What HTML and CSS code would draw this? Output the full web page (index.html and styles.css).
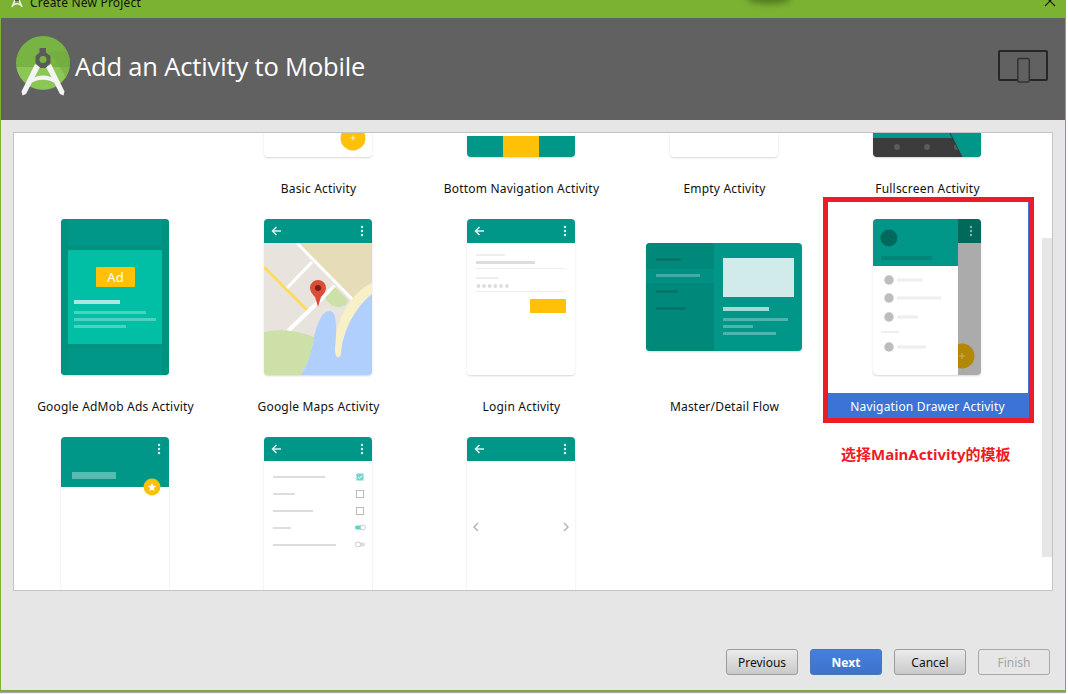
FILE: index.html
```html
<!DOCTYPE html>
<html lang="en">
<head>
    <meta charset="UTF-8">
    <meta name="viewport" content="width=device-width, initial-scale=1.0">
    <title>Create New Project</title>
    <link rel="stylesheet" href="styles.css">
</head>
<body>
    <svg class="defs" width="0" height="0">
        <defs>
            <g id="app-bar">
                <rect width="108" height="24" fill="#009688"/>
                <path d="M17 12H9M12.5 8L8.5 12L12.5 16" fill="none" stroke="#e0f2f1" stroke-width="1.5"/>
                <circle cx="98" cy="8" r="1.2" fill="#e0f2f1"/>
                <circle cx="98" cy="12" r="1.2" fill="#e0f2f1"/>
                <circle cx="98" cy="16" r="1.2" fill="#e0f2f1"/>
            </g>
        </defs>
    </svg>

    <div class="window">
        <div class="titlebar">
            <svg class="title-icon" viewBox="0 0 14 12" width="14" height="12">
                <path d="M5 4L2 11M9 4L12 11M3.500 9Q7 6.500 10.500 9" fill="none" stroke="#f2f2f2" stroke-width="1.500"/>
                <rect x="5" y="1" width="4" height="4" fill="#555"/>
            </svg>
            <span class="title-text">Create New Project</span>
            <span class="title-blob"></span>
            <svg class="title-close" viewBox="0 0 12 12" width="12" height="12">
                <path d="M1 1L11 11M11 1L1 11" stroke="#1a1a1a" stroke-width="1.1"/>
            </svg>
        </div>

        <div class="header">
            <svg class="logo" viewBox="0 0 54 60" width="54" height="60">
                <circle cx="27" cy="27" r="27" fill="#78b443"/>
                <path d="M0.4 31A27 27 0 0 0 53.6 31Z" fill="#8bc657"/>
                <path d="M34 16L51 15A27 27 0 0 1 50 41Z" fill="#6fa83e" opacity="0.5"/>
                <path d="M19 28L24 31L10 58L6.500 59.500L5.500 55.500ZM35 28L30 31L44 58L47.500 59.500L48.500 55.500Z" fill="#f4f4f4"/>
                <path d="M11.500 45Q27 34 42.500 45L41 48Q27 39.500 13 48Z" fill="#f4f4f4"/>
                <path d="M23.500 12H30V16.500L34.500 20V27L29.500 32H24.500L19.500 27V20L23.500 16.500Z" fill="#5a5a5a"/>
                <circle cx="27" cy="23.500" r="3.500" fill="#78b443"/>
            </svg>
            <h1 class="header-title">Add an Activity to Mobile</h1>
            <svg class="device-icon" viewBox="0 0 50 34" width="50" height="34">
                <rect x="1" y="1" width="48" height="29" rx="1" fill="none" stroke="#262626" stroke-width="2"/>
                <rect x="19.800" y="8.500" width="11.500" height="23.500" rx="1.500" fill="#616161" stroke="#333" stroke-width="1.500"/>
            </svg>
        </div>

        <div class="content">
            <div class="panel">
                <div class="gallery">

                    <div class="cell">
                        <div class="thumb-slot"></div>
                    </div>

                    <div class="cell">
                        <div class="thumb-slot">
                            <svg class="thumb" viewBox="0 0 108 156">
                                <rect width="108" height="156" fill="#fff"/>
                                <circle cx="89" cy="137" r="12.500" fill="#ffc107"/>
                                <path d="M86.500 137H91.500M89 134.500V139.500" stroke="#fff2c4" stroke-width="1"/>
                            </svg>
                        </div>
                        <div class="label">Basic Activity</div>
                    </div>

                    <div class="cell">
                        <div class="thumb-slot">
                            <svg class="thumb" viewBox="0 0 108 156">
                                <rect width="108" height="156" fill="#fff"/>
                                <rect y="135" width="108" height="21" fill="#009688"/>
                                <rect x="36" y="135" width="36" height="21" fill="#ffc107"/>
                            </svg>
                        </div>
                        <div class="label">Bottom Navigation Activity</div>
                    </div>

                    <div class="cell">
                        <div class="thumb-slot">
                            <svg class="thumb" viewBox="0 0 108 156">
                                <rect width="108" height="156" fill="#fff"/>
                            </svg>
                        </div>
                        <div class="label">Empty Activity</div>
                    </div>

                    <div class="cell">
                        <div class="thumb-slot">
                            <svg class="thumb" viewBox="0 0 108 156">
                                <rect width="108" height="138" fill="#009688"/>
                                <rect y="137" width="108" height="19" fill="#3c3c3c"/>
                                <circle cx="24" cy="146" r="3" fill="#5b5b5b"/>
                                <circle cx="54" cy="146" r="3" fill="#5b5b5b"/>
                                <circle cx="84" cy="146" r="3" fill="#5b5b5b"/>
                                <path d="M76 130H108V156H89Z" fill="#009688"/>
                                <path d="M76 130L89 156" stroke="#2f2f2f" stroke-width="0.8"/>
                            </svg>
                        </div>
                        <div class="label">Fullscreen Activity</div>
                    </div>

                    <div class="cell">
                        <div class="thumb-slot">
                            <svg class="thumb" viewBox="0 0 108 156">
                                <rect width="108" height="156" fill="#009688"/>
                                <rect width="7" height="156" fill="#00917f"/>
                                <rect x="101" width="7" height="156" fill="#00917f"/>
                                <rect y="27" width="108" height="4" fill="#00917f"/>
                                <rect y="125" width="108" height="4" fill="#00917f"/>
                                <rect x="7" y="31" width="94" height="94" rx="1" fill="#00bfa5"/>
                                <rect x="35" y="48" width="39" height="20" rx="1" fill="#ffc107"/>
                                <text x="54.500" y="63" class="ad-text">Ad</text>
                                <rect x="13" y="81" width="46" height="4" fill="#fff" opacity="0.65"/>
                                <rect x="13" y="92" width="72" height="3" fill="#fff" opacity="0.3"/>
                                <rect x="13" y="99" width="82" height="3" fill="#fff" opacity="0.3"/>
                                <rect x="13" y="106" width="52" height="3" fill="#fff" opacity="0.3"/>
                            </svg>
                        </div>
                        <div class="label">Google AdMob Ads Activity</div>
                    </div>

                    <div class="cell">
                        <div class="thumb-slot">
                            <svg class="thumb" viewBox="0 0 108 156">
                                <rect width="108" height="156" fill="#e8e4dd"/>
                                <path d="M33 24H108V64Q98 70 92 83Z" fill="#e6dcb8"/>
                                <path d="M0 48L43 91" stroke="#fddc5c" stroke-width="3"/>
                                <path d="M33 24L91 83M48 43L23 69" stroke="#fff" stroke-width="3"/>
                                <path d="M71 67L24 112" stroke="#fff" stroke-width="4"/>
                                <path d="M61 79L71 68L84 81Q83 88 75 88Q66 88 61 79Z" fill="#cde0a8"/>
                                <path d="M108 64C90 72 73 95 70 130C70 139 75 141 77 135C79 110 92 88 108 75Z" fill="#f8f1c8"/>
                                <path d="M108 75C92 88 79 110 77 135C75 141 71 139 71 130C73 112 73 92 66 92C58 92 54 103 50 118C47 135 43 148 36 156H108Z" fill="#b0cffc"/>
                                <path d="M0 113Q25 108 50 118C47 135 43 148 36 156H0Z" fill="#cde0a8"/>
                                <path d="M54 88L51 78C48 75 46 72 46 69A8 8 0 0 1 62 69C62 72 60 75 57 78Z" fill="#dd4b39"/>
                                <circle cx="54" cy="69" r="3" fill="#7b1f16"/>
                                <use href="#app-bar"/>
                            </svg>
                        </div>
                        <div class="label">Google Maps Activity</div>
                    </div>

                    <div class="cell">
                        <div class="thumb-slot">
                            <svg class="thumb" viewBox="0 0 108 156">
                                <rect width="108" height="156" fill="#fff"/>
                                <use href="#app-bar"/>
                                <rect x="9" y="35" width="29" height="2" fill="#eee"/>
                                <rect x="9" y="42" width="59" height="3" fill="#ddd"/>
                                <rect x="9" y="49" width="90" height="1" fill="#eee"/>
                                <rect x="9" y="58" width="22" height="2" fill="#eee"/>
                                <circle cx="11.500" cy="67" r="1.900" fill="#ddd"/>
                                <circle cx="17" cy="67" r="1.900" fill="#ddd"/>
                                <circle cx="22.700" cy="67" r="1.900" fill="#ddd"/>
                                <circle cx="28.300" cy="67" r="1.900" fill="#ddd"/>
                                <circle cx="34" cy="67" r="1.900" fill="#ddd"/>
                                <circle cx="40" cy="67" r="1.900" fill="#ddd"/>
                                <rect x="9" y="72" width="90" height="1" fill="#eee"/>
                                <rect x="63" y="80" width="36" height="14" fill="#ffc107"/>
                            </svg>
                        </div>
                        <div class="label">Login Activity</div>
                    </div>

                    <div class="cell">
                        <div class="thumb-slot">
                            <svg class="thumb thumb-wide" viewBox="0 0 156 108">
                                <rect width="156" height="108" fill="#009688"/>
                                <rect width="68" height="108" fill="#00897b"/>
                                <rect y="26" width="68" height="14" fill="#009083"/>
                                <rect x="10" y="15" width="25" height="3" fill="#00756a"/>
                                <rect x="10" y="31" width="44" height="3" fill="#fff" opacity="0.25"/>
                                <rect x="10" y="47" width="22" height="3" fill="#00756a"/>
                                <rect x="10" y="64" width="29" height="3" fill="#00756a"/>
                                <rect x="77" y="15" width="71" height="39" fill="#d1eaea"/>
                                <rect x="77" y="64" width="46" height="4" fill="#fff" opacity="0.65"/>
                                <rect x="77" y="75" width="65" height="3" fill="#fff" opacity="0.3"/>
                                <rect x="77" y="82" width="30" height="3" fill="#fff" opacity="0.3"/>
                                <rect x="77" y="89" width="53" height="3" fill="#fff" opacity="0.3"/>
                            </svg>
                        </div>
                        <div class="label">Master/Detail Flow</div>
                    </div>

                    <div class="cell cell-selected">
                        <div class="thumb-slot">
                            <svg class="thumb" viewBox="0 0 108 156">
                                <rect width="108" height="156" fill="#ababab"/>
                                <rect x="85" width="23" height="24" fill="#00695c"/>
                                <circle cx="98" cy="8" r="1.200" fill="#80b4ad"/>
                                <circle cx="98" cy="12" r="1.200" fill="#80b4ad"/>
                                <circle cx="98" cy="16" r="1.200" fill="#80b4ad"/>
                                <circle cx="89" cy="137" r="12.500" fill="#b28704"/>
                                <path d="M86 137H92M89 134V140" stroke="#c9ae5c" stroke-width="1"/>
                                <rect width="85" height="156" fill="#fff"/>
                                <rect width="85" height="47" fill="#009688"/>
                                <circle cx="16" cy="19" r="8.500" fill="#00695c"/>
                                <rect x="8" y="37" width="51" height="4" fill="#008577"/>
                                <circle cx="16" cy="61" r="4.700" fill="#bdbdbd"/>
                                <rect x="24" y="59.500" width="25" height="3" fill="#eee"/>
                                <circle cx="16" cy="79" r="4.700" fill="#bdbdbd"/>
                                <rect x="24" y="77.500" width="44" height="3" fill="#eee"/>
                                <circle cx="16" cy="98" r="4.700" fill="#bdbdbd"/>
                                <rect x="24" y="96.500" width="21" height="3" fill="#eee"/>
                                <rect x="8" y="112" width="18" height="2" fill="#eee"/>
                                <circle cx="16" cy="128" r="4.700" fill="#bdbdbd"/>
                                <rect x="24" y="126.500" width="29" height="3" fill="#eee"/>
                            </svg>
                        </div>
                        <div class="label">Navigation Drawer Activity</div>
                    </div>

                    <div class="cell">
                        <div class="thumb-slot">
                            <svg class="thumb" viewBox="0 0 108 156">
                                <rect width="108" height="156" fill="#fff"/>
                                <rect width="108" height="50" fill="#009688"/>
                                <circle cx="98" cy="8" r="1.200" fill="#e0f2f1"/>
                                <circle cx="98" cy="12" r="1.200" fill="#e0f2f1"/>
                                <circle cx="98" cy="16" r="1.200" fill="#e0f2f1"/>
                                <rect x="11" y="35" width="44" height="7" fill="#fff" opacity="0.35"/>
                                <circle cx="91" cy="50" r="8.500" fill="#ffc107"/>
                                <path d="M91 46L92.200 48.800L95.200 49L92.900 51L93.600 54L91 52.400L88.400 54L89.100 51L86.800 49L89.800 48.800Z" fill="#fff"/>
                            </svg>
                        </div>
                    </div>

                    <div class="cell">
                        <div class="thumb-slot">
                            <svg class="thumb" viewBox="0 0 108 156">
                                <rect width="108" height="156" fill="#fff"/>
                                <use href="#app-bar"/>
                                <rect x="9" y="39" width="52" height="2" fill="#ddd"/>
                                <rect x="9" y="56" width="22" height="2" fill="#ddd"/>
                                <rect x="9" y="73" width="40" height="2" fill="#ddd"/>
                                <rect x="9" y="90" width="18" height="2" fill="#ddd"/>
                                <rect x="9" y="107" width="63" height="2" fill="#ddd"/>
                                <rect x="92.500" y="36.500" width="7" height="7" fill="#6fd8cc"/>
                                <path d="M94 40L95.500 41.500L98 38.500" fill="none" stroke="#fff" stroke-width="1"/>
                                <rect x="92.500" y="53.500" width="7" height="7" fill="#fff" stroke="#bbb"/>
                                <rect x="92.500" y="70.500" width="7" height="7" fill="#fff" stroke="#bbb"/>
                                <rect x="91" y="88.500" width="10" height="4" rx="2" fill="#5fd3c6"/>
                                <circle cx="99" cy="90.500" r="2.500" fill="#fff" stroke="#bbb" stroke-width="0.7"/>
                                <rect x="91" y="105.500" width="10" height="4" rx="2" fill="#ddd"/>
                                <circle cx="94" cy="107.500" r="2.500" fill="#fff" stroke="#bbb" stroke-width="0.7"/>
                            </svg>
                        </div>
                    </div>

                    <div class="cell">
                        <div class="thumb-slot">
                            <svg class="thumb" viewBox="0 0 108 156">
                                <rect width="108" height="156" fill="#fff"/>
                                <use href="#app-bar"/>
                                <path d="M11 86L7 90L11 94M97 86L101 90L97 94" fill="none" stroke="#b5b5b5" stroke-width="1.500"/>
                            </svg>
                        </div>
                    </div>

                </div>
                <div class="scrollbar"></div>
                <div class="highlight"></div>
                <div class="annotation">选择MainActivity的模板</div>
            </div>
        </div>

        <div class="footer">
            <button class="btn" type="button">Previous</button>
            <button class="btn btn-primary" type="button">Next</button>
            <button class="btn" type="button">Cancel</button>
            <button class="btn btn-disabled" type="button" disabled>Finish</button>
        </div>
    </div>
</body>
</html>
```

FILE: styles.css
```css
html, body {
    margin: 0;
    padding: 0;
    background: #fff;
}

body {
    width: 1066px;
    height: 694px;
    overflow: hidden;
    font-family: "Noto Sans", "Noto Sans CJK SC", sans-serif;
}

.defs {
    display: block;
    height: 0;
}

.window {
    height: 692px;
    display: flex;
    flex-direction: column;
    background: #e6e6e6;
    border-left: 1px solid #7cb232;
    border-right: 1px solid #7cb232;
    border-bottom: 2px solid #79a844;
    box-sizing: border-box;
    box-shadow: 0 1px 1px #a8a8a8;
}

.titlebar {
    height: 18px;
    flex: none;
    display: flex;
    align-items: flex-start;
    background: #7cb232;
    overflow: hidden;
}

.title-icon {
    flex: none;
    margin: -4px 0 0 9px;
}

.title-text {
    margin: -6px 0 0 6px;
    font-size: 12px;
    line-height: 18px;
    letter-spacing: 0.2px;
    color: #111;
}

.title-blob {
    flex: none;
    width: 44px;
    height: 10px;
    margin: -6px 0 0 606px;
    border-radius: 50%;
    background: #4f7a24;
    filter: blur(3px);
}

.title-close {
    flex: none;
    margin: -5px 9px 0 auto;
}

.header {
    height: 102px;
    flex: none;
    display: flex;
    align-items: flex-start;
    background: #616161;
    padding: 0 17px 0 15px;
}

.logo {
    flex: none;
    margin-top: 18px;
}

.header-title {
    margin: 27px 0 0 5px;
    font-family: "Open Sans", sans-serif;
    font-size: 25.5px;
    line-height: 42px;
    font-weight: 400;
    letter-spacing: -0.15px;
    color: #fff;
    white-space: nowrap;
}

.device-icon {
    flex: none;
    margin: 32px 0 0 auto;
}

.content {
    flex: 1;
    min-height: 0;
    padding: 12px 12px 0;
}

.panel {
    position: relative;
    height: 457px;
    background: #fff;
    border: 1px solid #c4c4c4;
    overflow: hidden;
}

.gallery {
    display: grid;
    grid-template-columns: repeat(5, 203px);
    grid-auto-rows: 218px;
    margin-top: -151px;
}

.cell {
    display: flex;
    flex-direction: column;
    align-items: center;
}

.cell-selected {
    box-shadow: inset -1px 0 0 #3c74d6;
}

.thumb-slot {
    height: 156px;
    margin: 19px 1px 18px 0;
    display: flex;
    align-items: center;
}

.thumb {
    display: block;
    width: 108px;
    height: 156px;
    border-radius: 4px;
    box-shadow: 0 1px 2px rgba(0, 0, 0, 0.16);
}

.thumb-wide {
    width: 156px;
    height: 108px;
}

.ad-text {
    font-family: "Noto Sans", sans-serif;
    font-size: 13px;
    fill: #fff;
    text-anchor: middle;
}

.label {
    align-self: stretch;
    height: 25px;
    line-height: 27px;
    font-size: 12px;
    letter-spacing: 0.2px;
    text-align: center;
    color: #111;
    white-space: nowrap;
}

.cell-selected .label {
    background: #3c74d6;
    color: #fff;
}

.scrollbar {
    position: absolute;
    top: 105px;
    right: 0;
    width: 10px;
    height: 319px;
    background: #e6e6e6;
}

.highlight {
    position: absolute;
    left: 809px;
    top: 64px;
    width: 201px;
    height: 216px;
    border: 5px solid #ed1c24;
}

.annotation {
    position: absolute;
    left: 827px;
    top: 311px;
    font-size: 15px;
    line-height: 20px;
    font-weight: 700;
    color: #ed1c24;
    white-space: nowrap;
}

.footer {
    flex: none;
    display: flex;
    justify-content: flex-end;
    gap: 12px;
    padding: 0 15px 15px 0;
    margin-top: auto;
}

.btn {
    width: 72px;
    height: 26px;
    padding: 0;
    border: 1px solid #9c9c9c;
    border-radius: 3px;
    background: linear-gradient(#ebebeb, #c9c9c9);
    font-family: "Noto Sans", sans-serif;
    font-size: 12px;
    color: #111;
}

.btn-primary {
    border-color: #4a76b8;
    background: linear-gradient(#4480e0, #3f72c9);
    font-weight: 700;
    color: #fff;
}

.btn-disabled {
    border-color: #a8a8a8;
    background: #e6e6e6;
    color: #a6a6a6;
}
```
